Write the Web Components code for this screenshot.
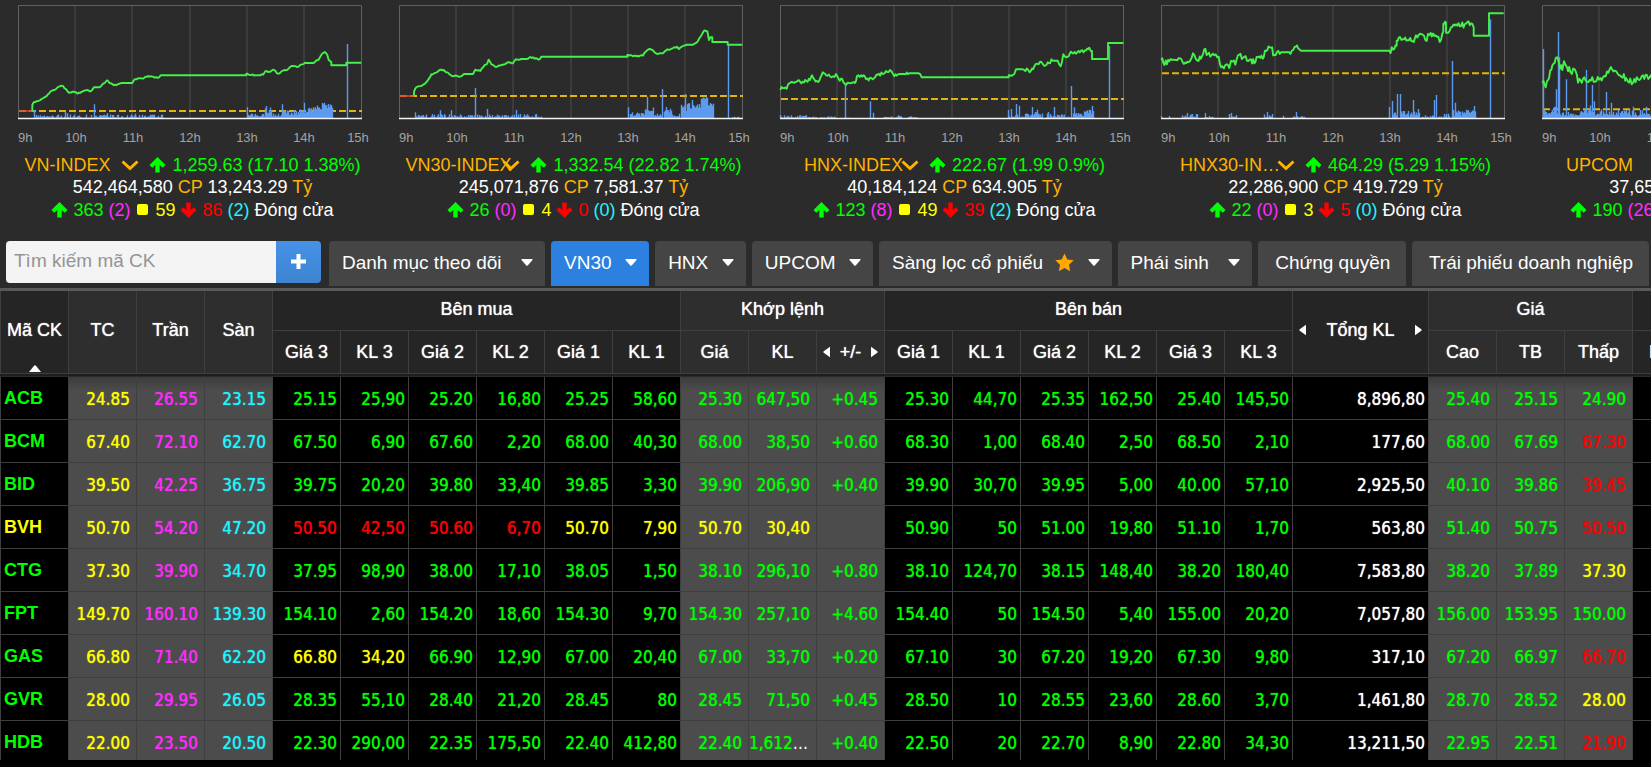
<!DOCTYPE html>
<html lang="vi">
<head>
<meta charset="utf-8">
<title>Bảng giá</title>
<style>
  html, body { margin: 0; height: 100%; background: #000; overflow: hidden; }
  body { font-family: "Liberation Sans", Arial, sans-serif; color: #fff; }
</style>
</head>
<body>
<trading-app>
  <index-strip slot="indices"></index-strip>
  <market-nav slot="nav">
    <nav-tab caret roomy>Danh mục theo dõi</nav-tab>
    <nav-tab caret active>VN30</nav-tab>
    <nav-tab caret>HNX</nav-tab>
    <nav-tab caret>UPCOM</nav-tab>
    <nav-tab caret star>Sàng lọc cổ phiếu</nav-tab>
    <nav-tab caret roomy>Phái sinh</nav-tab>
    <nav-tab roomy>Chứng quyền</nav-tab>
    <nav-tab roomy>Trái phiếu doanh nghiệp</nav-tab>
  </market-nav>
  <price-board slot="board"></price-board>
</trading-app>

<script>
class Base extends HTMLElement {
  render(html) {
    if (!this.shadowRoot) this.attachShadow({ mode: "open" });
    this.shadowRoot.innerHTML = html;
  }
}

class TradingApp extends Base {
  connectedCallback() {
    this.render(`
      <style>
        :host { display: flex; flex-direction: column; height: 100vh; padding-bottom: 7px; box-sizing: border-box; }
        .top { background: #2b2b2b; border-bottom: 3px solid #595959; flex: none; }
        main { flex: 1; min-height: 0; overflow: hidden; }
      </style>
      <div class="top"><slot name="indices"></slot><slot name="nav"></slot></div>
      <main><slot name="board"></slot></main>`);
  }
}

/* Chart series use a grid of one third of a pixel; x starts at the card's own origin. */
const CHARTS = [
  { name: "VN-INDEX", value: "1,259.63 (17.10 1.38%)", vol: "542,464,580", val: "13,243.29", up: 363, ceil: 2, flat: 59, down: 86, floor: 2,
    x0: 55, ref: 333, open: 98, jitter: 2,
    line: [98,332,98,315,104,306,118,302,130,295,145,283,155,273,168,268,178,260,187,257,197,266,207,278,225,276,233,281,245,276,258,271,275,273,283,262,300,262,312,250,323,241,330,250,350,256,370,249,398,249,403,240,415,235,430,236,445,228,465,233,478,232,483,226,740,226,742,221,755,225,790,224,797,214,812,215,821,209,835,221,850,212,862,210,870,202,880,198,897,200,903,194,920,189,940,189,955,180,965,165,975,156,983,165,987,180,995,186,998,196,1040,196,1042,188,1085,188],
    env: [[103,490,1,11],[742,795,4,14],[795,815,14,32],[815,846,5,14],[850,900,8,24],[900,940,12,32],[940,968,26,38],[968,980,38,46],[980,1000,30,42]],
    spikes: [[102,330],[196,336],[202,340],[282,313],[322,340],[405,341],[741,322],[799,318],[846,313],[912,308],[973,310],[1043,132]] },
  { name: "VN30-INDEX", value: "1,332.54 (22.82 1.74%)", vol: "245,071,876", val: "7,581.37", up: 26, ceil: 0, flat: 4, down: 0, floor: 0,
    x0: 28, ref: 288, open: 73, jitter: 2,
    line: [73,287,73,275,80,262,95,258,105,252,115,240,125,223,135,219,155,209,165,213,178,221,187,228,200,227,210,230,225,222,250,222,257,209,272,213,285,195,292,192,297,179,305,193,320,201,335,195,352,188,370,190,378,178,395,177,410,177,422,171,450,178,455,170,713,170,715,165,730,169,760,167,768,155,780,147,793,155,805,162,820,160,830,151,845,146,862,140,868,147,880,138,890,134,910,134,925,123,935,107,943,92,953,94,958,120,962,112,968,112,971,126,1014,126,1016,134,1058,134],
    env: [[75,455,1,12],[720,765,5,20],[765,790,20,36],[790,820,6,14],[822,845,12,36],[845,872,5,14],[873,910,18,46],[910,935,30,48],[935,955,54,64],[955,972,34,52],[1025,1050,0,4]],
    spikes: [[75,337],[152,331],[183,331],[255,264],[291,327],[378,330],[714,322],[773,290],[818,267],[885,282],[908,300],[1016,134]] },
  { name: "HNX-INDEX", value: "222.67 (1.99 0.9%)", vol: "40,184,124", val: "634.905", up: 123, ceil: 8, flat: 49, down: 39, floor: 2,
    x0: 32, ref: 297, open: 0, jitter: 6,
    line: [33,270,40,264,52,266,60,250,75,248,85,242,100,245,122,240,128,226,135,238,150,242,160,217,170,226,187,232,200,222,208,237,218,236,227,252,243,250,257,249,263,228,275,226,290,237,310,238,325,224,340,222,350,213,362,210,375,229,390,222,405,222,420,220,440,220,448,220,457,232,718,232,720,226,735,222,740,208,760,208,785,212,795,199,812,185,825,198,835,187,850,182,865,182,874,199,882,163,895,170,905,155,920,161,935,152,950,151,960,143,968,153,970,177,1016,177,1018,129,1062,129],
    env: [[34,140,1,9],[150,200,1,8],[225,240,0,5],[340,395,1,9],[415,445,1,8],[720,735,0,10],[735,770,2,14],[770,820,2,18],[830,870,2,14],[870,910,2,14],[910,945,3,16],[945,975,12,26]],
    spikes: [[33,345],[227,255],[303,304],[312,338],[717,330],[726,327],[741,312],[749,317],[788,321],[803,329],[835,336],[855,321],[906,258],[915,322],[969,318],[1020,138]] },
  { name: "HNX30-INDEX", value: "464.29 (5.29 1.15%)", vol: "22,286,900", val: "419.729", up: 22, ceil: 0, flat: 3, down: 5, floor: 0,
    x0: 35, ref: 220, open: 0, jitter: 9,
    line: [36,180,42,188,60,184,80,180,92,175,100,187,122,183,131,160,140,178,155,176,165,148,175,162,195,166,208,170,215,202,228,195,240,204,245,182,258,194,266,166,285,170,305,178,315,190,325,172,340,176,350,153,365,143,375,165,395,157,415,157,432,150,440,140,450,148,455,152,720,152,735,147,742,137,745,122,760,118,790,124,800,106,820,104,828,120,840,105,855,108,875,120,882,95,884,72,890,68,893,98,905,82,920,73,935,78,950,71,965,70,973,82,975,107,1019,107,1021,40,1063,40],
    env: [[98,145,2,15],[165,195,1,9],[238,262,2,14],[345,372,1,12],[430,465,1,7],[728,745,2,22],[755,810,4,22],[815,860,1,9],[865,900,2,14],[910,945,6,26],[945,980,10,26]],
    spikes: [[36,348],[60,348],[112,339],[168,339],[245,339],[261,345],[352,336],[369,342],[402,347],[441,336],[720,321],[729,303],[743,282],[752,282],[792,300],[805,327],[855,300],[860,285],[909,183],[918,308],[973,318],[1022,58]] },
  { name: "UPCOM", value: "92.05 (0.58 0.64%)", vol: "37,651,200", val: "612.482", up: 190, ceil: 26, flat: 91, down: 86, floor: 9,
    x0: 1177, ref: 328, open: 0, jitter: 10,
    line: [1178,248,1188,262,1195,240,1205,210,1215,188,1222,172,1228,190,1238,210,1243,184,1252,202,1262,215,1275,208,1285,248,1300,236,1320,240,1340,244,1352,234,1368,229,1380,208,1395,212,1408,226,1430,234,1450,248,1465,238,1480,226,1500,232,1540,236,1600,228,1700,228,1860,228,1870,205,1950,190,2060,180,2205,180],
    env: [[1180,1205,8,22],[1205,1230,14,44],[1230,1290,5,18],[1290,1335,14,42],[1335,1400,6,26],[1400,1530,5,24],[1530,1620,3,18],[1860,2110,4,30]],
    spikes: [[1179,147],[1183,330],[1218,268],[1224,96],[1229,172],[1248,238],[1310,210],[1328,255],[1332,304],[1368,276],[1383,308],[1450,320],[1490,320]] }
];

function noise(seed) {
  let s = seed;
  return () => (s = (s * 16807) % 2147483647) / 2147483647;
}

function chartSvg(c, i) {
  const rnd = noise(97 + i * 41), X = v => ((v - c.x0) / 3 + 16).toFixed(1), Y = v => (v / 3).toFixed(1);
  let d = "", px, py;
  for (let k = 0; k < c.line.length; k += 2) {
    const x = c.line[k], y = c.line[k + 1];
    if (px === undefined) d += `M${X(x)} ${Y(y)}`;
    else if (py === y || x - px < 4) d += `L${X(px)} ${Y(y)}L${X(x)} ${Y(y)}`;
    else {
      const n = Math.max(1, Math.round((x - px) / 4));
      for (let j = 1; j <= n; j++) {
        const t = j / n, jit = j === n ? 0 : (rnd() - .5) * 2 * c.jitter;
        d += `L${X(px + (x - px) * t)} ${Y(py + (y - py) * t + jit)}`;
      }
    }
    px = x; py = y;
  }
  let bars = "";
  const bar = (x, top) => bars += `M${Math.round(+X(x)) + .5} 118V${Y(top)}`;
  c.env.forEach(([a, b, lo, hi]) => {
    for (let x = a; x < b; x += 3) { const r = rnd(); bar(x, 354 - lo - (hi - lo) * r * (hi < 16 ? r : 1)); }
  });
  c.spikes.forEach(([x, y]) => bar(x, y));
  const labels = ["10h", "11h", "12h", "13h", "14h"].map((t, k) => `<text x="${74 + k * 57}" y="142" text-anchor="middle">${t}</text>`).join("");
  return `<svg viewBox="0 0 381 150" width="381" height="150" role="img" aria-label="${c.name}">
    <path d="M73 5V118M130 5V118M188 5V118M245 5V118M302 5V118" stroke="#3b3b3b" stroke-width="2" fill="none"/>
    <path d="M16.5 119V5.500H359.500V119" stroke="#616161" fill="none"/>
    <path d="M17 ${Y(c.ref)}H360" stroke="#e3b40a" stroke-width="2" stroke-dasharray="7 3" fill="none"/>
    ${c.open ? `<path d="M17 ${Y(c.ref)}H${X(c.open)}" stroke="#d8432e" stroke-width="1.500"/>` : ""}
    <path d="${bars}" stroke="#5c9bf0" fill="none" stroke-width="1.400"/>
    <path d="M16 118.500H360" stroke="#f4f4f4" stroke-width="1.500"/>
    <path d="${d}" stroke="#45f04b" stroke-width="1.900" stroke-linejoin="round" fill="none"/>
    <g fill="#a3a3a3" font-family="Liberation Sans, Arial, sans-serif" font-size="13"><text x="16" y="142">9h</text>${labels}<text x="356" y="142" text-anchor="middle">15h</text></g>
  </svg>`;
}

class IndexCard extends Base {
  set data([c, i]) {
    const up = `<svg class="ic up" viewBox="0 0 16 16"><path d="M8 0 16 8 13.300 10.800 10.200 7.900V15.500H5.800V7.900L2.700 10.800 0 8Z"/></svg>`;
    const down = `<svg class="ic down" viewBox="0 0 16 16"><path d="M8 16 0 8 2.700 5.200 5.800 8.100V.500H10.200V8.100L13.300 5.200 16 8Z"/></svg>`;
    this.render(`
      <style>
        :host { display: block; flex: none; width: 381px; font-size: 18px; line-height: 22px; text-align: center; white-space: nowrap; }
        svg { display: block; }
        .row1 { display: flex; justify-content: center; align-items: center; height: 23px; margin-top: 3px; color: #0f0; }
        .name { position: relative; width: 112px; margin-right: 13px; text-align: left; color: #ffb300; }
        .name a { display: block; overflow: hidden; text-overflow: ellipsis; color: inherit; text-decoration: none; }
        .name svg { position: absolute; right: -3px; top: 6px; width: 18px; height: 11px; fill: none; stroke: #ffb300; stroke-width: 3; }
        .row1 .ic { margin-right: 6px; }
        .row3 { display: flex; justify-content: center; align-items: center; gap: 5px; height: 23px; }
        .ic { width: 17px; height: 16px; flex: none; }
        .up { fill: #0f0; } .down { fill: red; }
        .u { color: #0f0; } .c { color: #ff2bff; } .y { color: #ff0; } .d { color: red; } .f { color: #20f4ff; } .o { color: #ffb300; }
        .sq { width: 11px; height: 11px; border-radius: 2px; background: #ff0; margin: 0 2px; }
      </style>
      ${chartSvg(c, i)}
      <div class="row1"><span class="name"><a href="#">${c.name}</a><svg viewBox="0 0 18 11"><path d="M1.500 1.500 9 8.500 16.500 1.500"/></svg></span>${up}<span>${c.value}</span></div>
      <div>${c.vol} <span class="o">CP</span> ${c.val} <span class="o">Tỷ</span></div>
      <div class="row3">${up}<span class="u">${c.up}</span><span class="c">(${c.ceil})</span><span class="sq"></span><span class="y">${c.flat}</span>${down}<span class="d">${c.down}</span><span class="f">(${c.floor})</span><span>Đóng cửa</span></div>`);
  }
}

class IndexStrip extends Base {
  connectedCallback() {
    this.render(`<style>:host { display: flex; overflow: hidden; padding-left: 2px; height: 241px; box-sizing: border-box; }</style>`);
    CHARTS.forEach((c, i) => {
      const card = document.createElement("index-card");
      card.data = [c, i];
      this.shadowRoot.append(card);
    });
  }
}

class NavTab extends Base {
  connectedCallback() {
    this.render(`
      <style>
        :host { display: flex; flex: 1 1 auto; --bg: #454545; }
        :host([active]) { --bg: #2b80e0; }
        :host([roomy]) { flex-grow: 5; }
        button { flex: 1; display: flex; align-items: center; justify-content: center; gap: 12px; height: 45px; padding: 0 12px 2px 13px; border: 0; border-radius: 4px 4px 0 0; background: var(--bg); color: #fff; font: 19px/24px "Liberation Sans", Arial, sans-serif; white-space: nowrap; }
        .caret { width: 12px; height: 7px; margin-left: auto; fill: #fff; }
        .star { width: 19px; height: 19px; fill: #ffa800; }
      </style>
      <button type="button"><slot></slot>
        ${this.hasAttribute("star") ? `<svg class="star" viewBox="0 0 20 20"><path d="M10 .500 12.900 6.800 19.700 7.600 14.700 12.300 16 19.200 10 15.800 4 19.200 5.300 12.300.300 7.600 7.100 6.800Z"/></svg>` : ""}
        ${this.hasAttribute("caret") ? `<svg class="caret" viewBox="0 0 12 7"><path d="M1 0H11Q12 0 11.500 1L6.700 6.500Q6 7.200 5.300 6.500L.500 1Q0 0 1 0Z"/></svg>` : ""}
      </button>`);
  }
}

class MarketNav extends Base {
  connectedCallback() {
    this.render(`
      <style>
        :host { display: flex; gap: 8px; padding: 0 2px 2px 6px; align-items: flex-start; }
        form { display: flex; flex: none; width: 315px; height: 42px; border-radius: 4px; overflow: hidden; }
        input { flex: 1; min-width: 0; border: 0; padding: 0 8px 2px; background: #f4f4f4; color: #333; font: 19px/24px "Liberation Sans", Arial, sans-serif; outline: 0; }
        input::placeholder { color: #949494; }
        form button { width: 45px; border: 0; padding: 0; background: linear-gradient(#4592e8, #3e84d0); }
        form svg { display: block; width: 15px; height: 15px; margin: 0 auto 2px; fill: #fff; }
        nav { display: flex; flex: 1; gap: 6px; min-width: 0; }
      </style>
      <form onsubmit="return false"><input type="text" aria-label="Tìm kiếm mã CK" placeholder="Tìm kiếm mã CK"><button type="button" aria-label="Thêm"><svg viewBox="0 0 15 15"><path d="M5.500 0H9.500V5.500H15V9.500H9.500V15H5.500V9.500H0V5.500H5.500Z"/></svg></button></form>
      <nav><slot></slot></nav>`);
  }
}

/* A leading letter marks the colour: y reference, r below, p ceiling, c floor, w neutral; none means above. */
const ROWS = `
ACB|y24.85|p26.55|c23.15|25.15|25,90|25.20|16,80|25.25|58,60|25.30|647,50|+0.45|25.30|44,70|25.35|162,50|25.40|145,50|w8,896,80|25.40|25.15|24.90
BCM|y67.40|p72.10|c62.70|67.50|6,90|67.60|2,20|68.00|40,30|68.00|38,50|+0.60|68.30|1,00|68.40|2,50|68.50|2,10|w177,60|68.00|67.69|r67.30
BID|y39.50|p42.25|c36.75|39.75|20,20|39.80|33,40|39.85|3,30|39.90|206,90|+0.40|39.90|30,70|39.95|5,00|40.00|57,10|w2,925,50|40.10|39.86|r39.45
BVH|y50.70|p54.20|c47.20|r50.50|r42,50|r50.60|r6,70|y50.70|y7,90|y50.70|y30,40||50.90|50|51.00|19,80|51.10|1,70|w563,80|51.40|50.75|r50.50
CTG|y37.30|p39.90|c34.70|37.95|98,90|38.00|17,10|38.05|1,50|38.10|296,10|+0.80|38.10|124,70|38.15|148,40|38.20|180,40|w7,583,80|38.20|37.89|y37.30
FPT|y149.70|p160.10|c139.30|154.10|2,60|154.20|18,60|154.30|9,70|154.30|257,10|+4.60|154.40|50|154.50|5,40|155.00|20,20|w7,057,80|156.00|153.95|150.00
GAS|y66.80|p71.40|c62.20|y66.80|y34,20|66.90|12,90|67.00|20,40|67.00|33,70|+0.20|67.10|30|67.20|19,20|67.30|9,80|w317,10|67.20|66.97|r66.70
GVR|y28.00|p29.95|c26.05|28.35|55,10|28.40|21,20|28.45|80|28.45|71,50|+0.45|28.50|10|28.55|23,60|28.60|3,70|w1,461,80|28.70|28.52|y28.00
HDB|y22.00|p23.50|c20.50|22.30|290,00|22.35|175,50|22.40|412,80|22.40|1,612,40|+0.40|22.50|20|22.70|8,90|22.80|34,30|w13,211,50|22.95|22.51|r21.90`.trim().split("\n").map(r => r.split("|"));

class PriceBoard extends Base {
  connectedCallback() {
    const grey = i => (i >= 1 && i <= 3) || (i >= 10 && i <= 12) || (i >= 20 && i <= 22);
    const L = `<svg class="ar" viewBox="0 0 8 12"><path d="M8 0V12L.800 6.800Q0 6 .800 5.200Z"/></svg>`;
    const R = `<svg class="ar" viewBox="0 0 8 12"><path d="M0 0V12L7.200 6.800Q8 6 7.200 5.200Z"/></svg>`;
    const body = ROWS.map(r => `<tr>${r.map((v, i) => {
      if (i === 0) return `<th scope="row" class="${v === "BVH" ? "y" : "g"}">${v}</th>`;
      const m = /^([yrpcw]?)(.*)$/.exec(v);
      return `<td class="${grey(i) ? "grey" : ""}"><span class="${m[1] || "g"}">${m[2]}</span></td>`;
    }).join("")}<td></td></tr>`).join("");
    this.render(`
      <style>
        :host { display: block; }
        table { table-layout: fixed; width: 1700px; border-collapse: separate; border-spacing: 0; background: #1e1e1e; }
        col { width: 68px; } col.wide { width: 136px; }
        th, td { box-sizing: border-box; border: 0 solid #3f3f3f; border-width: 0 0 1px 1px; padding: 0; }
        thead th { background: #252525; font-weight: 400; font-size: 18px; line-height: 22px; text-shadow: 0 0 1px #fff; white-space: nowrap; }
        thead th.lt { background: #2e2e2e; }
        thead tr:first-child { height: 40px; } thead tr:last-child { height: 43px; }
        thead tr:first-child th { padding-bottom: 4px; }
        .sort { position: relative; }
        .sort svg { position: absolute; bottom: 1px; left: 28px; width: 12px; height: 7px; fill: #fff; }
        .pm { display: flex; align-items: center; justify-content: space-between; padding: 0 6px; }
        .ar { width: 7px; height: 12px; fill: #fff; flex: none; }
        tbody::before { content: ""; display: block; height: 2px; }
        tbody tr { height: 43px; }
        tbody tr:first-child > * { border-top: 1px solid #2b2b2b; height: 44px; }
        tbody th { background: #000; text-align: left; padding-left: 3px; font-size: 18px; }
        tbody td { background: #000; text-align: right; padding: 2px 3px 0 0; font: 17px/22px "DejaVu Sans Condensed", "DejaVu Sans", sans-serif; overflow: hidden; text-overflow: ellipsis; white-space: nowrap; }
        tbody span { text-shadow: 0 0 1px currentColor; }
        tbody td.grey { background: #4c4c4c; padding-right: 6px; }
        tbody tr:first-child td.grey { background: linear-gradient(#3c3c3c, #4c4c4c 14px); }
        .g { color: #0f0; } .y { color: #ff0; } .r { color: red; } .p { color: #ff2bff; } .c { color: #20f4ff; } .w { color: #fff; }
      </style>
      <table>
        <colgroup>${"<col>".repeat(19)}<col class="wide">${"<col>".repeat(4)}</colgroup>
        <thead>
          <tr><th rowspan="2" class="sort">Mã CK<svg viewBox="0 0 12 7"><path d="M0 7 5.300.600Q6 0 6.700.600L12 7Z"/></svg></th><th rowspan="2" class="lt">TC</th><th rowspan="2" class="lt">Trần</th><th rowspan="2" class="lt">Sàn</th>
            <th colspan="6">Bên mua</th><th colspan="3" class="lt">Khớp lệnh</th><th colspan="6">Bên bán</th>
            <th rowspan="2"><div class="pm">${L}<span>Tổng KL</span>${R}</div></th><th colspan="3" class="lt">Giá</th><th></th></tr>
          <tr><th>Giá 3</th><th>KL 3</th><th>Giá 2</th><th>KL 2</th><th>Giá 1</th><th>KL 1</th>
            <th class="lt">Giá</th><th class="lt">KL</th><th class="lt"><div class="pm">${L}<span>+/-</span>${R}</div></th>
            <th>Giá 1</th><th>KL 1</th><th>Giá 2</th><th>KL 2</th><th>Giá 3</th><th>KL 3</th>
            <th class="lt">Cao</th><th class="lt">TB</th><th class="lt">Thấp</th><th>Mua</th></tr>
        </thead>
        <tbody>${body}</tbody>
      </table>`);
  }
}

customElements.define("index-card", IndexCard);
customElements.define("index-strip", IndexStrip);
customElements.define("nav-tab", NavTab);
customElements.define("market-nav", MarketNav);
customElements.define("price-board", PriceBoard);
customElements.define("trading-app", TradingApp);
</script>
</body>
</html>
